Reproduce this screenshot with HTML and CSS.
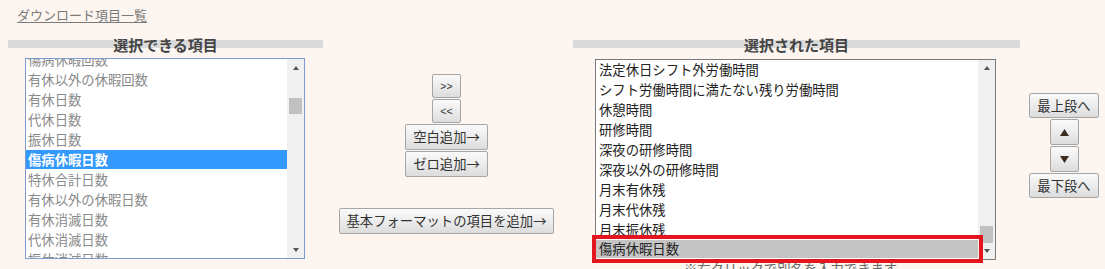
FILE: index.html
```html
<!DOCTYPE html>
<html lang="ja">
<head>
<meta charset="utf-8">
<title>ダウンロード項目一覧</title>
<link rel="stylesheet" href="styles.css">
</head>
<body>
<div class="page">
  <div class="title"><span class="title-link">ダウンロード項目一覧</span></div>
  <div class="main">
    <div class="col col-left">
      <div class="heading">選択できる項目</div>
      <div class="listbox listbox-left">
        <div class="list-area">
          <ul class="items items-left">
            <li>傷病休暇回数</li>
            <li>有休以外の休暇回数</li>
            <li>有休日数</li>
            <li>代休日数</li>
            <li>振休日数</li>
            <li class="sel-blue">傷病休暇日数</li>
            <li>特休合計日数</li>
            <li>有休以外の休暇日数</li>
            <li>有休消滅日数</li>
            <li>代休消滅日数</li>
            <li>振休消滅日数</li>
          </ul>
        </div>
        <div class="scrollbar">
          <div class="sb-btn"><span class="sb-up"></span></div>
          <div class="sb-track"><div class="sb-thumb thumb-left"></div></div>
          <div class="sb-btn"><span class="sb-down"></span></div>
        </div>
      </div>
    </div>
    <div class="col col-mid">
      <button class="btn btn-arrow">&gt;&gt;</button>
      <button class="btn btn-arrow">&lt;&lt;</button>
      <button class="btn btn-mid">空白追加→</button>
      <button class="btn btn-mid">ゼロ追加→</button>
      <button class="btn btn-mid btn-format">基本フォーマットの項目を追加→</button>
    </div>
    <div class="col col-right">
      <div class="heading">選択された項目</div>
      <div class="listbox-wrap">
        <div class="listbox listbox-right">
          <div class="list-area">
            <ul class="items items-right">
              <li>法定休日シフト外労働時間</li>
              <li>シフト労働時間に満たない残り労働時間</li>
              <li>休憩時間</li>
              <li>研修時間</li>
              <li>深夜の研修時間</li>
              <li>深夜以外の研修時間</li>
              <li>月末有休残</li>
              <li>月末代休残</li>
              <li>月末振休残</li>
              <li class="sel-gray">傷病休暇日数</li>
            </ul>
          </div>
          <div class="scrollbar">
            <div class="sb-btn"><span class="sb-up"></span></div>
            <div class="sb-track"><div class="sb-thumb thumb-right"></div></div>
            <div class="sb-btn"><span class="sb-down"></span></div>
          </div>
        </div>
        <div class="mark"></div>
      </div>
      <div class="caption">※右クリックで別名を入力できます。</div>
    </div>
    <div class="col col-order">
      <button class="btn btn-order">最上段へ</button>
      <button class="btn btn-tri"><svg width="9" height="7" viewBox="0 0 9 7"><polygon points="4.5,0 9,7 0,7" fill="#3a2c1e"/></svg></button>
      <button class="btn btn-tri"><svg width="9" height="7" viewBox="0 0 9 7"><polygon points="0,0 9,0 4.5,7" fill="#3a2c1e"/></svg></button>
      <button class="btn btn-order">最下段へ</button>
    </div>
  </div>
</div>
</body>
</html>
```
FILE: styles.css
```css
html, body {
  margin: 0;
  padding: 0;
  background: #fdf6f0;
  overflow: hidden;
}
body {
  font-family: "Noto Sans CJK JP", "Noto Sans", sans-serif;
  font-size: 13.33px;
  color: #333;
}
.page {
  width: 1105px;
  height: 269px;
  overflow: hidden;
}
.title {
  padding: 5px 0 0 17px;
  line-height: 19px;
  font-size: 13px;
  height: 19px;
}
.title-link {
  color: #7a7a7a;
  text-decoration: underline;
  text-underline-offset: 2px;
}
.main {
  display: flex;
  margin-top: 13px;
}
.col {
  flex-shrink: 0;
}
.col-left {
  width: 315px;
  margin-left: 8px;
}
.col-mid {
  width: 250px;
  box-sizing: border-box;
  padding: 37px 3px 0 0;
  display: flex;
  flex-direction: column;
  align-items: center;
  gap: 1px;
}
.col-right {
  width: 447px;
}
.col-order {
  width: 88px;
  padding-top: 56px;
  display: flex;
  flex-direction: column;
  align-items: center;
  gap: 1px;
}
.heading {
  height: 16px;
  line-height: 16px;
  font-size: 15px;
  font-weight: bold;
  color: #444;
  text-align: center;
  background: linear-gradient(to bottom, transparent 3px, #dadada 3px, #dadada 11px, transparent 11px);
}
.listbox {
  display: flex;
  background: #fff;
  box-sizing: border-box;
  height: 201px;
  overflow: hidden;
}
.listbox-left {
  width: 280px;
  margin: 5px 0 0 17px;
  border: 1px solid #7d9bd0;
}
.listbox-wrap {
  position: relative;
  width: 401px;
  margin: 6px 0 0 22px;
}
.listbox-right {
  width: 401px;
  border: 1px solid #7a7a7a;
}
.list-area {
  flex: 1;
  overflow: hidden;
}
.items {
  list-style: none;
  margin: 0;
  padding: 0;
}
.items li {
  height: 20px;
  line-height: 20px;
  padding-left: 2px;
  white-space: nowrap;
}
.items-left {
  margin-top: -9px;
  color: #8a8a8a;
}
.items-left li.sel-blue {
  background: #3399fd;
  color: #fff;
  font-weight: bold;
  height: 19px;
  line-height: 19px;
  margin-bottom: 1px;
}
.items-right {
  color: #222;
}
.items-right li {
  padding-left: 3px;
}
.items-right li.sel-gray {
  background: #c4c4c4;
  height: 18px;
  line-height: 18px;
}
.scrollbar {
  width: 17px;
  background: #f0f0f0;
  display: flex;
  flex-direction: column;
}
.sb-btn {
  height: 17px;
  display: flex;
  align-items: center;
  justify-content: center;
}
.sb-up {
  width: 0;
  height: 0;
  border-left: 3.5px solid transparent;
  border-right: 3.5px solid transparent;
  border-bottom: 4px solid #555;
}
.sb-down {
  width: 0;
  height: 0;
  border-left: 3.5px solid transparent;
  border-right: 3.5px solid transparent;
  border-top: 4px solid #555;
}
.sb-track {
  flex: 1;
}
.sb-thumb {
  width: 13px;
  margin-left: 2px;
  background: #c1c1c1;
}
.thumb-left {
  margin-top: 22px;
  height: 16px;
}
.thumb-right {
  margin-top: 149px;
  height: 17px;
}
.mark {
  position: absolute;
  left: -3px;
  top: 176px;
  width: 391px;
  height: 28px;
  box-sizing: border-box;
  border: 4px solid #e3161f;
}
.caption {
  text-align: center;
  line-height: 18px;
  color: #666;
}
.btn {
  font-family: "Noto Sans CJK JP", "Noto Sans", sans-serif;
  font-size: 13.33px;
  color: #333;
  background: linear-gradient(to bottom, #fafafa 0%, #ececec 50%, #dcdcdc 100%);
  border: 1px solid #a6a6a6;
  border-radius: 2px;
  box-sizing: border-box;
  padding: 0 7px;
  margin: 0;
  line-height: 1;
  display: flex;
  align-items: center;
  justify-content: center;
  white-space: nowrap;
}
.btn-arrow {
  width: 29px;
  height: 24px;
  font-size: 10.5px;
  padding: 0;
  font-family: "Liberation Sans", sans-serif;
}
.btn-mid {
  height: 26px;
}
.btn-format {
  margin-top: 30px;
  width: 215px;
}
.btn-order {
  width: 70px;
  height: 25px;
  padding: 0;
}
.btn-tri {
  width: 29px;
  height: 26px;
  padding: 0;
}
```
